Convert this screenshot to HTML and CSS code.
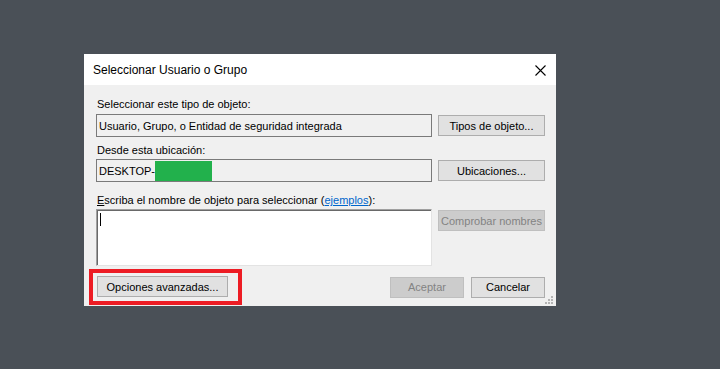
FILE: index.html
```html
<!DOCTYPE html>
<html lang="es">
<head>
    <meta charset="UTF-8">
    <meta name="viewport" content="width=device-width, initial-scale=1.0">
    <title>Seleccionar Usuario o Grupo</title>
    <link rel="stylesheet" href="styles.css">
</head>
<body>

    <div class="dialog">
        <div class="titlebar">
            <span class="title">Seleccionar Usuario o Grupo</span>
            <span class="close">
                <svg width="11" height="11" viewBox="0 0 11 11">
                    <path d="M0.5 0.5 L10.5 10.5 M10.5 0.5 L0.5 10.5" stroke="#000" stroke-width="1.1" fill="none"/>
                </svg>
            </span>
        </div>

        <div class="content">
            <div class="label first">Seleccionar este tipo de objeto:</div>
            <div class="row">
                <div class="field">Usuario, Grupo, o Entidad de seguridad integrada</div>
                <button class="btn">Tipos de objeto...</button>
            </div>

            <div class="label">Desde esta ubicación:</div>
            <div class="row">
                <div class="field">DESKTOP-<span class="masked"></span></div>
                <button class="btn">Ubicaciones...</button>
            </div>

            <div class="label names-label"><u>E</u>scriba el nombre de objeto para seleccionar (<a href="#">ejemplos</a>):</div>
            <div class="row top">
                <div class="names"><span class="caret"></span></div>
                <button class="btn disabled">Comprobar nombres</button>
            </div>

            <div class="actions">
                <div class="highlight">
                    <button class="btn wide">Opciones avanzadas...</button>
                </div>
                <div class="spacer"></div>
                <button class="btn small disabled">Aceptar</button>
                <button class="btn small">Cancelar</button>
            </div>
        </div>

        <svg class="grip" width="8" height="8" viewBox="0 0 8 8">
            <rect x="6" y="0" width="2" height="2" fill="#b4b4b4"/>
            <rect x="3" y="3" width="2" height="2" fill="#b4b4b4"/>
            <rect x="6" y="3" width="2" height="2" fill="#b4b4b4"/>
            <rect x="0" y="6" width="2" height="2" fill="#b4b4b4"/>
            <rect x="3" y="6" width="2" height="2" fill="#b4b4b4"/>
            <rect x="6" y="6" width="2" height="2" fill="#b4b4b4"/>
        </svg>
    </div>

</body>
</html>
```

FILE: styles.css
```css
body, html {
    margin: 0;
    padding: 0;
    font-family: "Liberation Sans", Arial, sans-serif;
    background-color: #4a5057;
    color: #000000;
}
body {
    padding: 54px 0 0 84px;
    height: 369px;
    box-sizing: border-box;
}
.dialog {
    position: relative;
    width: 472px;
    height: 252px;
    background-color: #f0f0f0;
    display: flex;
    flex-direction: column;
}
.titlebar {
    height: 31px;
    background-color: #ffffff;
    display: flex;
    align-items: center;
    padding: 0 9px;
}
.title {
    font-size: 12px;
    flex: 1;
    padding-top: 1px;
}
.close {
    display: flex;
    margin-right: 1px;
    padding-top: 1px;
}
.content {
    padding: 0 11px 0 12px;
    font-size: 11px;
}
.label {
    line-height: 13px;
    margin: 7px 0 2px 1px;
}
.label.first {
    margin-top: 13px;
    margin-bottom: 3px;
}
.label.names-label {
    margin-top: 12px;
}
.label a {
    color: #0066cc;
}
.row {
    display: flex;
    align-items: center;
    gap: 6px;
}
.row.top {
    align-items: flex-start;
}
.field {
    flex: 1;
    height: 23px;
    box-sizing: border-box;
    border: 1px solid #7a7a7a;
    padding: 0 2px;
    display: flex;
    align-items: center;
    white-space: nowrap;
}
.masked {
    display: inline-block;
    width: 57px;
    height: 20px;
    background-color: #22b14c;
}
.names {
    flex: 1;
    height: 57px;
    box-sizing: border-box;
    background-color: #ffffff;
    border: 1px solid #e3e3e3;
    border-top-color: #a0a0a0;
    border-left-color: #a0a0a0;
    box-shadow: inset 1px 1px 0 #696969;
    padding: 3px 2px;
}
.caret {
    display: block;
    width: 1px;
    height: 13px;
    margin-left: 1px;
    background-color: #000000;
}
.btn {
    width: 107px;
    height: 21px;
    box-sizing: border-box;
    background-color: #e1e1e1;
    border: 1px solid #adadad;
    font-family: "Liberation Sans", Arial, sans-serif;
    font-size: 11px;
    color: #000000;
    padding: 0;
}
.row.top .btn {
    margin-top: 1px;
}
.btn.disabled {
    background-color: #cccccc;
    border-color: #bfbfbf;
    color: #838383;
}
.actions {
    display: flex;
    align-items: center;
    gap: 7px;
    margin: 3px 0 0 -7px;
}
.highlight {
    border: 4px solid #ed1c24;
    padding: 3px 10px 4px 4px;
    display: flex;
}
.btn.wide {
    width: 131px;
}
.btn.small {
    width: 74px;
}
.spacer {
    flex: 1;
}
.grip {
    position: absolute;
    right: 3px;
    bottom: 2px;
}
```
